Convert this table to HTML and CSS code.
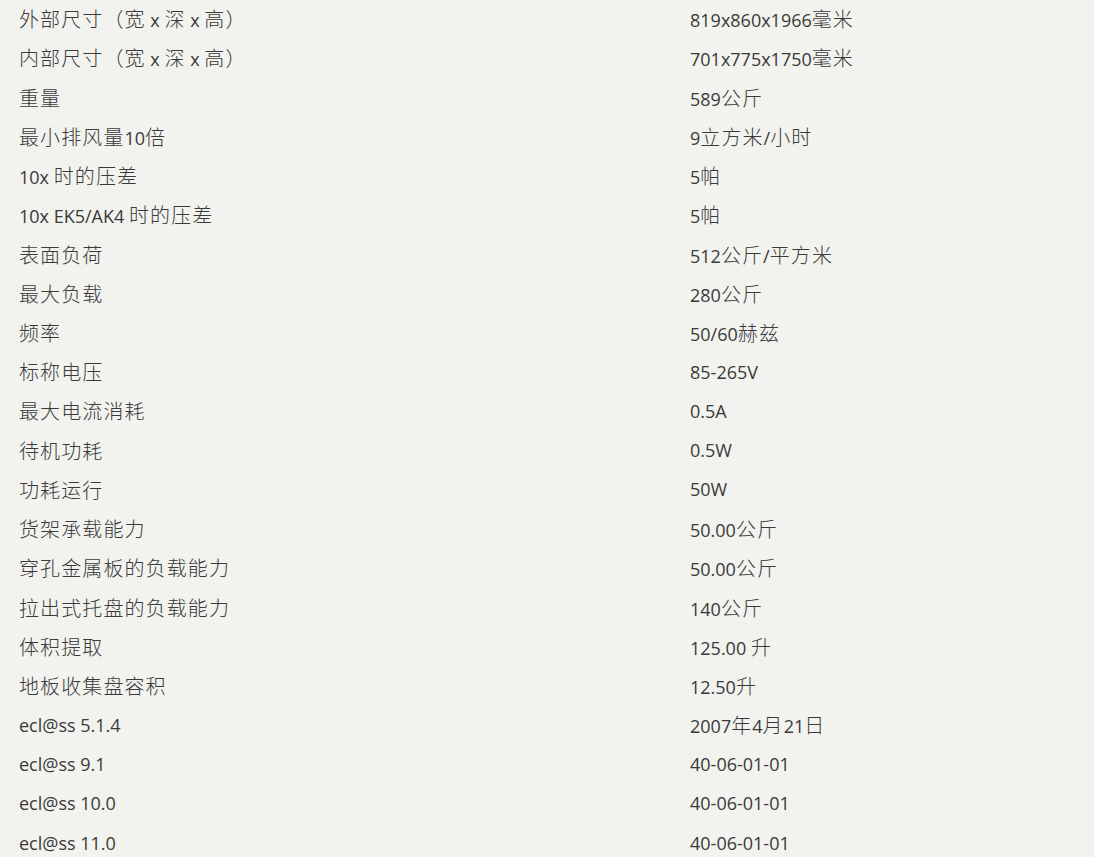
FILE: index.html
```html
<!DOCTYPE html>
<html lang="zh">
<head>
<meta charset="utf-8">
<link rel="stylesheet" href="styles.css">
</head>
<body>
<div class="specs">
  <div class="row"><div class="k"><span class="cj">外部尺寸（宽</span> x <span class="cj">深</span> x <span class="cj">高）</span></div><div class="v">819x860x1966<span class="cj">毫米</span></div></div>
  <div class="row"><div class="k"><span class="cj">内部尺寸（宽</span> x <span class="cj">深</span> x <span class="cj">高）</span></div><div class="v">701x775x1750<span class="cj">毫米</span></div></div>
  <div class="row"><div class="k"><span class="cj">重量</span></div><div class="v">589<span class="cj">公斤</span></div></div>
  <div class="row"><div class="k"><span class="cj">最小排风量</span>10<span class="cj">倍</span></div><div class="v">9<span class="cj">立方米</span>/<span class="cj">小时</span></div></div>
  <div class="row"><div class="k">10x <span class="cj">时的压差</span></div><div class="v">5<span class="cj">帕</span></div></div>
  <div class="row"><div class="k">10x EK5/AK4 <span class="cj">时的压差</span></div><div class="v">5<span class="cj">帕</span></div></div>
  <div class="row"><div class="k"><span class="cj">表面负荷</span></div><div class="v">512<span class="cj">公斤</span>/<span class="cj">平方米</span></div></div>
  <div class="row"><div class="k"><span class="cj">最大负载</span></div><div class="v">280<span class="cj">公斤</span></div></div>
  <div class="row"><div class="k"><span class="cj">频率</span></div><div class="v">50/60<span class="cj">赫兹</span></div></div>
  <div class="row"><div class="k"><span class="cj">标称电压</span></div><div class="v">85-265V</div></div>
  <div class="row"><div class="k"><span class="cj">最大电流消耗</span></div><div class="v">0.5A</div></div>
  <div class="row"><div class="k"><span class="cj">待机功耗</span></div><div class="v">0.5W</div></div>
  <div class="row"><div class="k"><span class="cj">功耗运行</span></div><div class="v">50W</div></div>
  <div class="row"><div class="k"><span class="cj">货架承载能力</span></div><div class="v">50.00<span class="cj">公斤</span></div></div>
  <div class="row"><div class="k"><span class="cj">穿孔金属板的负载能力</span></div><div class="v">50.00<span class="cj">公斤</span></div></div>
  <div class="row"><div class="k"><span class="cj">拉出式托盘的负载能力</span></div><div class="v">140<span class="cj">公斤</span></div></div>
  <div class="row"><div class="k"><span class="cj">体积提取</span></div><div class="v">125.00 <span class="cj">升</span></div></div>
  <div class="row"><div class="k"><span class="cj">地板收集盘容积</span></div><div class="v">12.50<span class="cj">升</span></div></div>
  <div class="row"><div class="k">ecl@ss 5.1.4</div><div class="v">2007<span class="cj">年</span>4<span class="cj">月</span>21<span class="cj">日</span></div></div>
  <div class="row"><div class="k">ecl@ss 9.1</div><div class="v">40-06-01-01</div></div>
  <div class="row"><div class="k">ecl@ss 10.0</div><div class="v">40-06-01-01</div></div>
  <div class="row"><div class="k">ecl@ss 11.0</div><div class="v">40-06-01-01</div></div>
</div>
</body>
</html>
```
FILE: styles.css
```css
html, body {
  margin: 0;
  padding: 0;
  background: #f2f2ee;
}
body {
  font-family: "Open Sans", "Noto Sans CJK SC", sans-serif;
  font-size: 18px;
  color: #3a3a3a;
}
.specs {
  display: flex;
  flex-direction: column;
  margin-top: -1px;
  padding: 0 0 0 19px;
}
.row {
  display: grid;
  grid-template-columns: 671px 1fr;
  height: 39.24px;
  align-items: center;
}
.k, .v {
  white-space: nowrap;
}
.cj {
  font-family: "Noto Sans CJK SC", sans-serif;
  font-size: 20px;
  font-weight: 300;
  letter-spacing: 1.1px;
}
```
